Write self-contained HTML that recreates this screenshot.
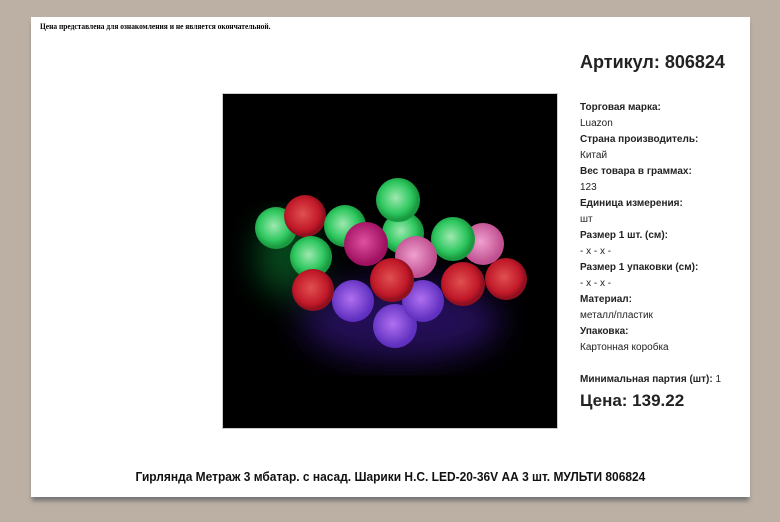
<!DOCTYPE html>
<html><head><meta charset="utf-8"><style>
body{margin:0;width:780px;height:522px;background:#bcb0a4;position:relative;overflow:hidden;font-family:"Liberation Sans",Arial,sans-serif}
.page{position:absolute;left:31px;top:17px;width:719px;height:480px;background:#fff;box-shadow:0 5px 4px -1px #777}
.note{position:absolute;left:40px;top:22px;font:bold 8px "Liberation Serif",serif;color:#000;transform:scaleX(.93);transform-origin:0 0}
.img{position:absolute;left:222px;top:93px;width:334px;height:334px;background:#000;border:1px solid #ccc;overflow:hidden}
.r{position:absolute;left:580px;color:#222;font-size:10px;margin-top:2px}
.b{font-weight:bold}
.t{position:absolute;top:469px;left:0;width:780px;text-align:center;font:bold 13px "Liberation Sans",sans-serif;color:#111;transform:scaleX(.92);transform-origin:395px 0}
</style></head><body>
<div class="page"></div>
<div class="note">Цена представлена для ознакомления и не является окончательной.</div>
<div class="img"><svg width="334" height="334" viewBox="222 93 334 334">
<defs>
<filter id="g"><feGaussianBlur stdDeviation="16"/></filter>
<radialGradient id="gr" cx=".45" cy=".45"><stop offset="0" stop-color="#9fe8b0"/><stop offset=".7" stop-color="#2fc860"/><stop offset="1" stop-color="#1a9a40"/></radialGradient>
<radialGradient id="rd" cx=".45" cy=".45"><stop offset="0" stop-color="#e05050"/><stop offset=".8" stop-color="#c01828"/><stop offset="1" stop-color="#901020"/></radialGradient>
<radialGradient id="mg" cx=".45" cy=".45"><stop offset="0" stop-color="#e050a0"/><stop offset="1" stop-color="#a01060"/></radialGradient>
<radialGradient id="pk" cx=".45" cy=".45"><stop offset="0" stop-color="#f0a0d0"/><stop offset="1" stop-color="#c05090"/></radialGradient>
<radialGradient id="pu" cx=".45" cy=".45"><stop offset="0" stop-color="#b070f0"/><stop offset="1" stop-color="#6030c0"/></radialGradient>
</defs>
<g filter="url(#g)" opacity=".45">
<ellipse cx="400" cy="320" rx="100" ry="40" fill="#5020c0"/>
<ellipse cx="285" cy="255" rx="30" ry="40" fill="#10a040"/>
</g>
<circle cx="275" cy="227" r="21" fill="url(#gr)"/>
<circle cx="304" cy="215" r="21" fill="url(#rd)"/>
<circle cx="344" cy="225" r="21" fill="url(#gr)"/>
<circle cx="402" cy="232" r="21" fill="url(#gr)"/>
<circle cx="397" cy="199" r="22" fill="url(#gr)"/>
<circle cx="310" cy="256" r="21" fill="url(#gr)"/>
<circle cx="482" cy="243" r="21" fill="url(#pk)"/>
<circle cx="452" cy="238" r="22" fill="url(#gr)"/>
<circle cx="415" cy="256" r="21" fill="url(#pk)"/>
<circle cx="365" cy="243" r="22" fill="url(#mg)"/>
<circle cx="394" cy="325" r="22" fill="url(#pu)"/>
<circle cx="422" cy="300" r="21" fill="url(#pu)"/>
<circle cx="352" cy="300" r="21" fill="url(#pu)"/>
<circle cx="505" cy="278" r="21" fill="url(#rd)"/>
<circle cx="312" cy="289" r="21" fill="url(#rd)"/>
<circle cx="391" cy="279" r="22" fill="url(#rd)"/>
<circle cx="462" cy="283" r="22" fill="url(#rd)"/>
</svg></div>
<div class="r b" style="top:50px;font-size:18px">Артикул: 806824</div>
<div class="r b" style="top:100px">Торговая марка:</div>
<div class="r" style="top:116px">Luazon</div>
<div class="r b" style="top:132px">Страна производитель:</div>
<div class="r" style="top:148px">Китай</div>
<div class="r b" style="top:164px">Вес товара в граммах:</div>
<div class="r" style="top:180px">123</div>
<div class="r b" style="top:196px">Единица измерения:</div>
<div class="r" style="top:212px">шт</div>
<div class="r b" style="top:228px">Размер 1 шт. (см):</div>
<div class="r" style="top:244px">- x - x -</div>
<div class="r b" style="top:260px">Размер 1 упаковки (см):</div>
<div class="r" style="top:276px">- x - x -</div>
<div class="r b" style="top:292px">Материал:</div>
<div class="r" style="top:308px">металл/пластик</div>
<div class="r b" style="top:324px">Упаковка:</div>
<div class="r" style="top:340px">Картонная коробка</div>
<div class="r" style="top:372px"><b>Минимальная партия (шт):</b> 1</div>
<div class="r b" style="top:389px;font-size:17px">Цена: 139.22</div>
<div class="t">Гирлянда Метраж 3 мбатар. с насад. Шарики Н.С. LED-20-36V АА 3 шт. МУЛЬТИ 806824</div>
</body></html>
